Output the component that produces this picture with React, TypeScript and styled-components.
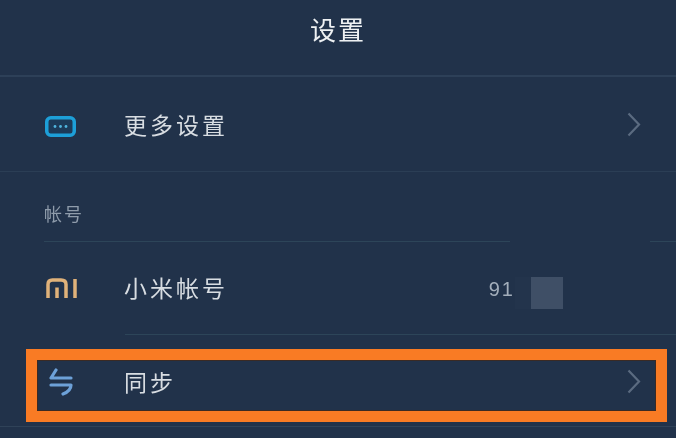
import React from "react";
import styled, { createGlobalStyle } from "styled-components";

const Global = createGlobalStyle`
  html, body { margin: 0; padding: 0; background: #21324a; }
  #root { width: 676px; height: 438px; overflow: hidden; }
`;

const Page = styled.div`
  width: 676px;
  height: 438px;
  overflow: hidden;
  background: #21324a;
  color: #dfe4e8;
  font-family: "Noto Sans CJK SC", "Noto Sans", sans-serif;
  display: flex;
  flex-direction: column;
  filter: blur(0.45px);
`;

const Header = styled.header`
  height: 77px;
  flex: none;
  display: flex;
  justify-content: center;
  align-items: flex-start;
  padding: 10px 0 0 0;
  box-sizing: border-box;
  border-bottom: 2px solid #2d4058;
  font-size: 26px;
  line-height: 38px;
  letter-spacing: 2px;
  color: #eef1f3;
`;

const Row = styled.div`
  height: 95px;
  flex: none;
  box-sizing: border-box;
  display: flex;
  align-items: center;
  padding: 0 35px 0 44px;
  border-bottom: 1px solid #2b3e55;
`;

const IconSlot = styled.div<{ $left: number; $top?: number }>`
  width: 80px;
  flex: none;
  box-sizing: border-box;
  display: flex;
  align-items: center;
  padding-left: ${(p) => p.$left}px;
  padding-top: ${(p) => p.$top ?? 0}px;
`;

const Label = styled.div`
  flex: 1;
  font-size: 23px;
  line-height: 32px;
  letter-spacing: 3px;
  color: #d8dde2;
`;

const SectionTitle = styled.div`
  height: 70px;
  flex: none;
  box-sizing: border-box;
  margin-left: 44px;
  padding-top: 29px;
  font-size: 18px;
  line-height: 24px;
  letter-spacing: 2px;
  color: #8f9cab;
  background: linear-gradient(90deg, #2d4559 0, #2d4559 466px, transparent 466px, transparent 606px, #2d4559 606px) bottom / 100% 1px no-repeat;
`;

const AccountRow = styled.div`
  height: 93px;
  flex: none;
  box-sizing: border-box;
  display: flex;
  align-items: center;
  padding: 0 113px 4px 44px;
  background: linear-gradient(#2d4559, #2d4559) 125px bottom / 551px 1px no-repeat;
`;

const AccountValue = styled.div`
  display: flex;
  align-items: center;
  margin-top: 13px;
`;

const AccountNumber = styled.span`
  font-family: "Liberation Sans", sans-serif;
  font-size: 20px;
  line-height: 24px;
  letter-spacing: 2px;
  color: #a3aebb;
  margin-bottom: 8px;
`;

const Masked = styled.span`
  width: 16px;
  height: 32px;
  background: #23344c;
`;

const MaskBlock = styled.span`
  width: 32px;
  height: 32px;
  background: #3f4f66;
`;

const Highlight = styled.div`
  flex: none;
  height: 73px;
  box-sizing: border-box;
  margin: 14px 9px 0 26px;
  border: 11px solid #f97b24;
  box-shadow: inset 0 0 0 1px #3a2a24;
  display: flex;
  align-items: center;
  padding: 0 15px 9px 7px;
`;

const Footer = styled.div`
  flex: none;
  height: 1px;
  margin-top: 4px;
  background: #2f4258;
`;

const ChevronIcon = styled.svg`
  flex: none;
  fill: none;
  stroke: #5b6b80;
  stroke-width: 2.2;
`;

const More = () => (
  <svg width="31" height="21" viewBox="0 0 31 21">
    <rect x="1.75" y="1.75" width="27.5" height="17.5" rx="4" fill="#1c3a58" stroke="#1d9fd8" strokeWidth="3.5" />
    <circle cx="10" cy="10.5" r="1.4" fill="#4fb4dd" />
    <circle cx="15.5" cy="10.5" r="1.4" fill="#4fb4dd" />
    <circle cx="21" cy="10.5" r="1.4" fill="#4fb4dd" />
  </svg>
);

const Mi = () => (
  <svg width="31" height="20" viewBox="0 0 31 20" fill="none" stroke="#e0b27a" strokeWidth="3.5">
    <path d="M2 20V6.5Q2 2 6.5 2H15Q20 2 20 6.5V20" />
    <path d="M11 9.5V20" />
    <path d="M29 1V20" />
  </svg>
);

const Sync = () => (
  <svg width="24" height="28" viewBox="0 0 24 28" fill="none" stroke="#6da1d8" strokeWidth="3.2" strokeLinecap="round" strokeLinejoin="round">
    <path d="M7 2L2 10H22" />
    <path d="M2 17H22Q22 23 14 26" />
  </svg>
);

const Chevron = () => (
  <ChevronIcon width="14" height="25" viewBox="0 0 14 25">
    <path d="M1.5 1.5L12 12.5L1.5 23.5" />
  </ChevronIcon>
);

export default function App() {
  return (
    <>
      <Global />
      <Page>
        <Header>设置</Header>
        <Row>
          <IconSlot $left={1} $top={4}><More /></IconSlot>
          <Label>更多设置</Label>
          <Chevron />
        </Row>
        <SectionTitle>帐号</SectionTitle>
        <AccountRow>
          <IconSlot $left={2} $top={2}><Mi /></IconSlot>
          <Label>小米帐号</Label>
          <AccountValue>
            <AccountNumber>91</AccountNumber>
            <Masked />
            <MaskBlock />
          </AccountValue>
        </AccountRow>
        <Highlight>
          <IconSlot $left={5} $top={2}><Sync /></IconSlot>
          <Label>同步</Label>
          <Chevron />
        </Highlight>
        <Footer />
      </Page>
    </>
  );
}
